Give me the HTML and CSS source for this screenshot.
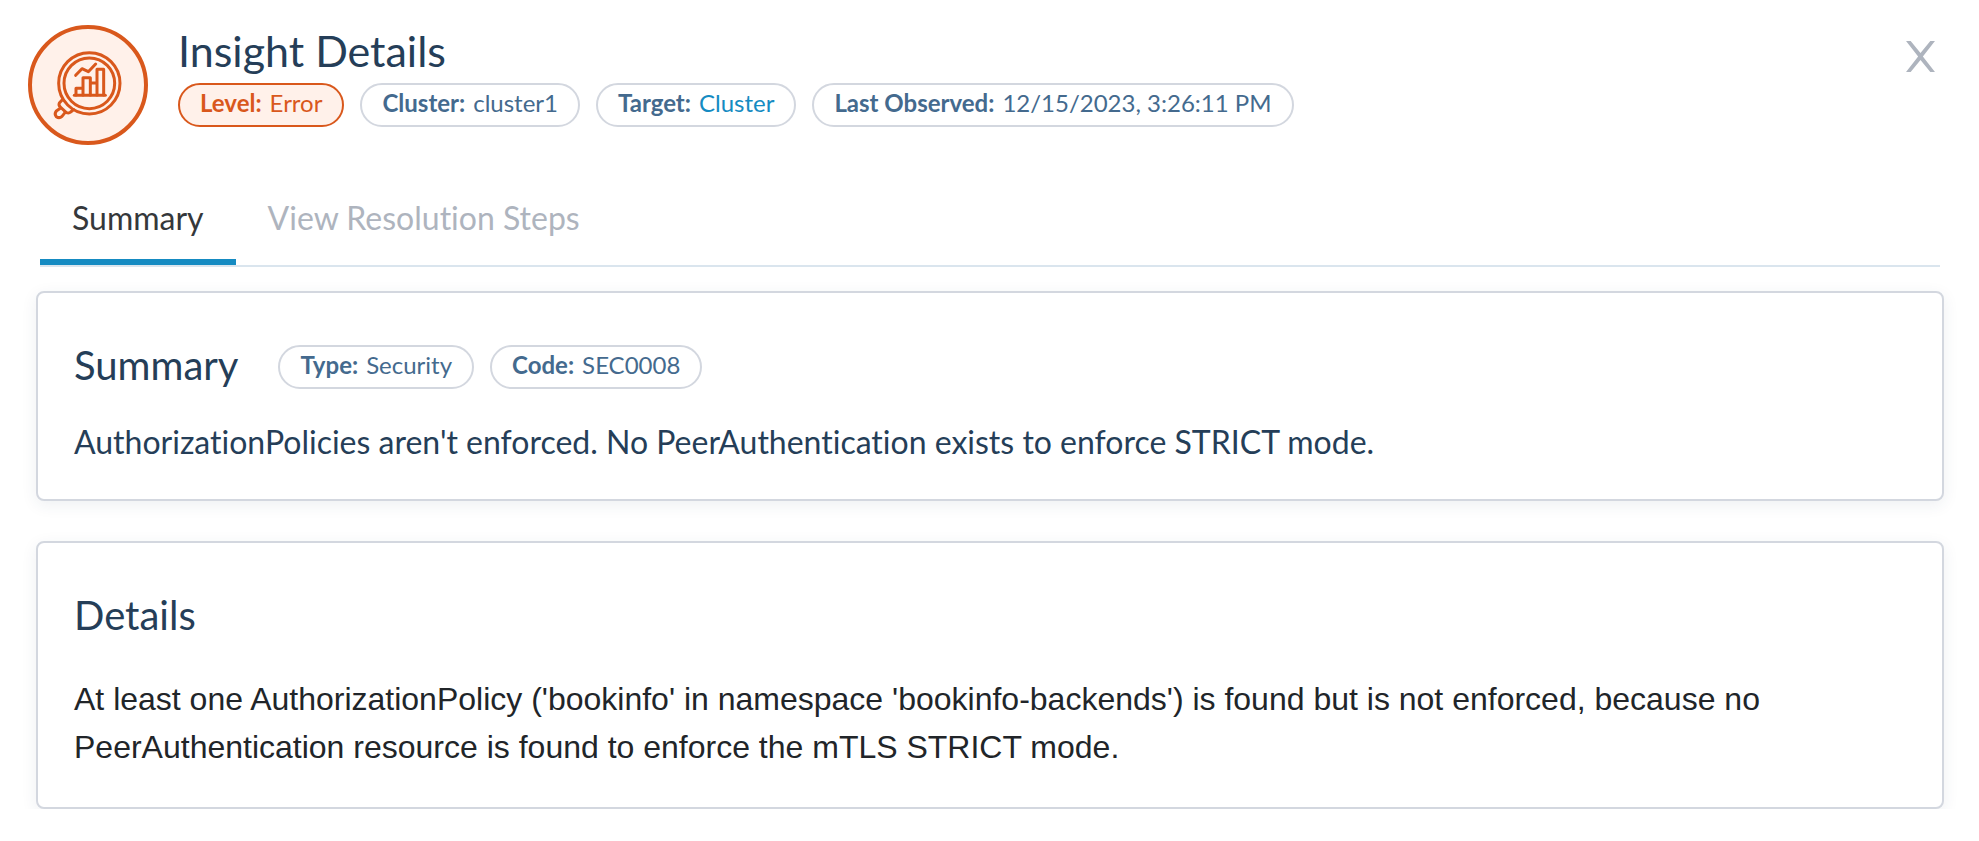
FILE: index.html
```html
<!DOCTYPE html>
<html lang="en">
<head>
<meta charset="utf-8">
<title>Insight Details</title>
<link rel="stylesheet" href="styles.css">
</head>
<body>
<header class="header">
  <svg class="insight-icon" viewBox="0 0 360 360" aria-hidden="true">
    <circle class="badge" cx="180" cy="180" r="174"/>
    <g class="glyph" transform="translate(-24 -30)">
      <circle cx="208" cy="205" r="92"/>
      <circle cx="208" cy="205" r="76"/>
      <path d="M163 241H256"/>
      <path d="M168 240V220H187M189 240V188H211V240M211 204H229M231 240V163H251V240"/>
      <path d="M167 181L186 161L205 170L227 147"/>
      <path d="M127 254L118 264Q115 271 121 276L139 293Q147 296 152 291L161 284"/>
      <path d="M122 279L109 288Q102 297 109 305Q118 311 126 304L135 293"/>
    </g>
  </svg>
  <div class="heading">
    <h1 class="title">Insight Details</h1>
    <div class="pills">
      <span class="pill pill-error"><b>Level:</b>Error</span>
      <span class="pill"><b>Cluster:</b>cluster1</span>
      <span class="pill"><b>Target:</b><a href="#cluster">Cluster</a></span>
      <span class="pill"><b>Last Observed:</b>12/15/2023, 3:26:11 PM</span>
    </div>
  </div>
  <button class="close" type="button" aria-label="Close">
    <svg viewBox="0 0 28 30" aria-hidden="true"><path d="M0 0H4.500L14 11.700L23.500 0H28L16.300 15L28 30H23.500L14 18.300L4.500 30H0L11.700 15Z"/></svg>
  </button>
</header>
<nav class="tabs" role="tablist">
  <button class="tab tab-active" type="button" role="tab" aria-selected="true">Summary</button>
  <button class="tab" type="button" role="tab" aria-selected="false">View Resolution Steps</button>
</nav>
<main class="cards">
  <section class="card">
    <div class="card-head">
      <h2 class="card-title">Summary</h2>
      <div class="pills">
        <span class="pill"><b>Type:</b>Security</span>
        <span class="pill"><b>Code:</b>SEC0008</span>
      </div>
    </div>
    <p class="message">AuthorizationPolicies aren't enforced. No PeerAuthentication exists to enforce STRICT mode.</p>
  </section>
  <section class="card">
    <div class="card-head">
      <h2 class="card-title">Details</h2>
    </div>
    <p class="details">At least one AuthorizationPolicy ('bookinfo' in namespace 'bookinfo-backends') is found but is not enforced, because no PeerAuthentication resource is found to enforce the mTLS STRICT mode.</p>
  </section>
</main>
</body>
</html>
```
FILE: styles.css
```css
* {
  box-sizing: border-box;
}

body {
  margin: 0;
  background: #fff;
  color: #253e58;
  font-family: Lato, sans-serif;
  font-variant-ligatures: none;
}

h1, h2, p {
  margin: 0;
  font-weight: 400;
}

.header {
  display: flex;
  align-items: flex-start;
  padding: 25px 44px 0 28px;
}

.insight-icon {
  flex: none;
  width: 120px;
  height: 120px;
}

.badge {
  fill: #fff1ea;
  stroke: #d9581c;
  stroke-width: 12;
}

.glyph {
  fill: none;
  stroke: #d9581c;
  stroke-width: 9;
  stroke-linecap: round;
  stroke-linejoin: round;
}

.heading {
  flex: 1;
  padding-left: 30px;
}

.title {
  font-size: 43px;
  line-height: 52px;
  padding-bottom: 6px;
}

.pills {
  display: flex;
  gap: 16px;
}

.pill {
  display: flex;
  gap: 8px;
  padding: 0 20px 4px;
  border: 2px solid #d3d7df;
  border-radius: 22px;
  background: #fff;
  color: #446a8e;
  font-size: 24px;
  line-height: 36px;
  white-space: nowrap;
}

.pill b {
  font-weight: 700;
}

.pill a {
  color: #158bc2;
  text-decoration: none;
}

.pill-error {
  border-color: #d9581c;
  background: #fff1ea;
  color: #d9581c;
}

.close {
  padding: 16px 0 0;
  border: 0;
  background: none;
  cursor: pointer;
}

.close svg {
  display: block;
  width: 29px;
  height: 31px;
  fill: #aeb4be;
}

.tabs {
  display: flex;
  margin: 40px 39px 0 40px;
  border-bottom: 2px solid #dae5ee;
}

.tab {
  padding: 9px 32px 17px;
  border: 0;
  border-bottom: 6px solid transparent;
  background: none;
  color: #aeb4be;
  font-family: inherit;
  font-size: 32px;
  line-height: 48px;
  font-variant-ligatures: none;
  cursor: pointer;
}

.tab-active {
  border-bottom-color: #158bc2;
  color: #35383b;
}

.cards {
  display: flex;
  flex-direction: column;
  gap: 40px;
  padding: 24px 35px 0 36px;
  overflow: hidden;
}

.card {
  padding: 48px 36px 33px;
  border: 2px solid #d3d7df;
  border-radius: 8px;
  background: #fff;
  box-shadow: 0 4px 16px rgba(37, 62, 88, 0.08);
}

.card-head {
  display: flex;
  align-items: center;
  gap: 40px;
}

.card-title {
  padding-bottom: 4px;
  font-size: 40px;
  line-height: 48px;
}

.message {
  padding-top: 25px;
  font-size: 32px;
  line-height: 48px;
}

.details {
  padding: 32px 0 3px;
  color: #212529;
  font-family: "Liberation Sans", sans-serif;
  font-size: 32px;
  line-height: 48px;
}
```
